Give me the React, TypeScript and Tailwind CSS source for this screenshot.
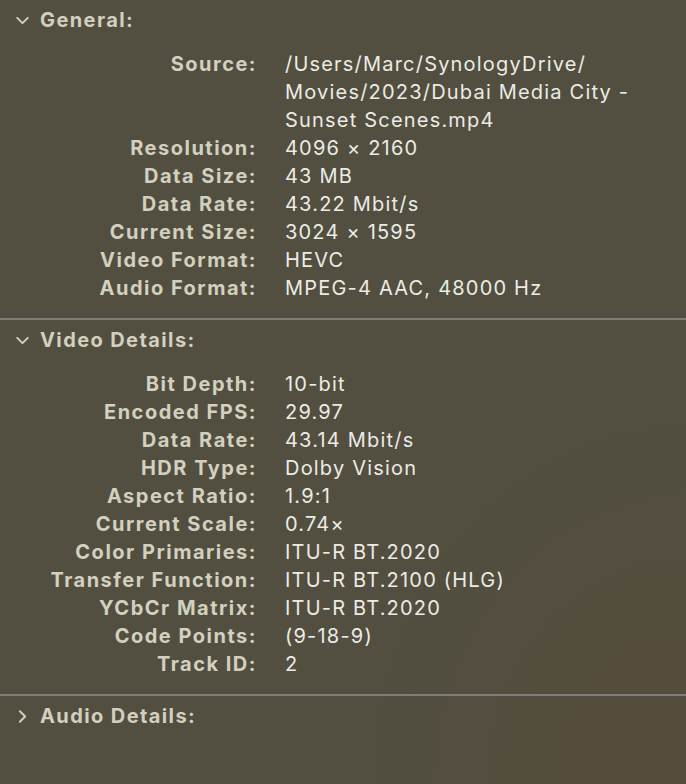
import { ChevronDown, ChevronRight } from "lucide-react";

type Row = [string, string | string[]];

const general: Row[] = [
  ["Source:", ["/Users/Marc/SynologyDrive/", "Movies/2023/Dubai Media City -", "Sunset Scenes.mp4"]],
  ["Resolution:", "4096 × 2160"],
  ["Data Size:", "43 MB"],
  ["Data Rate:", "43.22 Mbit/s"],
  ["Current Size:", "3024 × 1595"],
  ["Video Format:", "HEVC"],
  ["Audio Format:", "MPEG-4 AAC, 48000 Hz"],
];

const video: Row[] = [
  ["Bit Depth:", "10-bit"],
  ["Encoded FPS:", "29.97"],
  ["Data Rate:", "43.14 Mbit/s"],
  ["HDR Type:", "Dolby Vision"],
  ["Aspect Ratio:", "1.9:1"],
  ["Current Scale:", "0.74×"],
  ["Color Primaries:", "ITU-R BT.2020"],
  ["Transfer Function:", "ITU-R BT.2100 (HLG)"],
  ["YCbCr Matrix:", "ITU-R BT.2020"],
  ["Code Points:", "(9-18-9)"],
  ["Track ID:", "2"],
];

function Header({ title, open }: { title: string; open: boolean }) {
  return (
    <div className="flex h-[40px] items-center gap-[7px] pl-[12px]">
      {open ? (
        <ChevronDown className="size-[21px] text-[#cfcdbd]" strokeWidth={2.3} />
      ) : (
        <ChevronRight className="size-[21px] text-[#cfcdbd]" strokeWidth={2.3} />
      )}
      <span className="text-[20px] font-bold tracking-[1.4px] text-[#d2d0bf]">{title}</span>
    </div>
  );
}

function Rows({ rows }: { rows: Row[] }) {
  return (
    <div className="grid grid-cols-[257px_1fr] gap-x-[28px] pt-[10px] pb-[16px]">
      {rows.map(([label, value]) => (
        <div key={label} className="contents">
          <div className="text-right text-[20px] leading-[28px] font-bold tracking-[1.5px] text-[#d2d0bf]">
            {label}
          </div>
          <div className="text-[20px] leading-[28px] tracking-[1.2px] text-[#ecebe5]">
            {Array.isArray(value)
              ? value.map((line) => <div key={line}>{line}</div>)
              : value}
          </div>
        </div>
      ))}
    </div>
  );
}

export default function App() {
  return (
    <div
      className="h-[784px] w-[686px] overflow-hidden bg-[#524f40] bg-[radial-gradient(ellipse_at_100%_100%,#554c3d_0%,transparent_35%)]"
      style={{ fontFamily: "Inter, 'Noto Sans', sans-serif" }}
    >
      <Header title="General:" open />
      <Rows rows={general} />
      <div className="h-[2px] bg-[#7e7d79]" />
      <Header title="Video Details:" open />
      <Rows rows={video} />
      <div className="h-[2px] bg-[#7e7d79]" />
      <Header title="Audio Details:" open={false} />
    </div>
  );
}
